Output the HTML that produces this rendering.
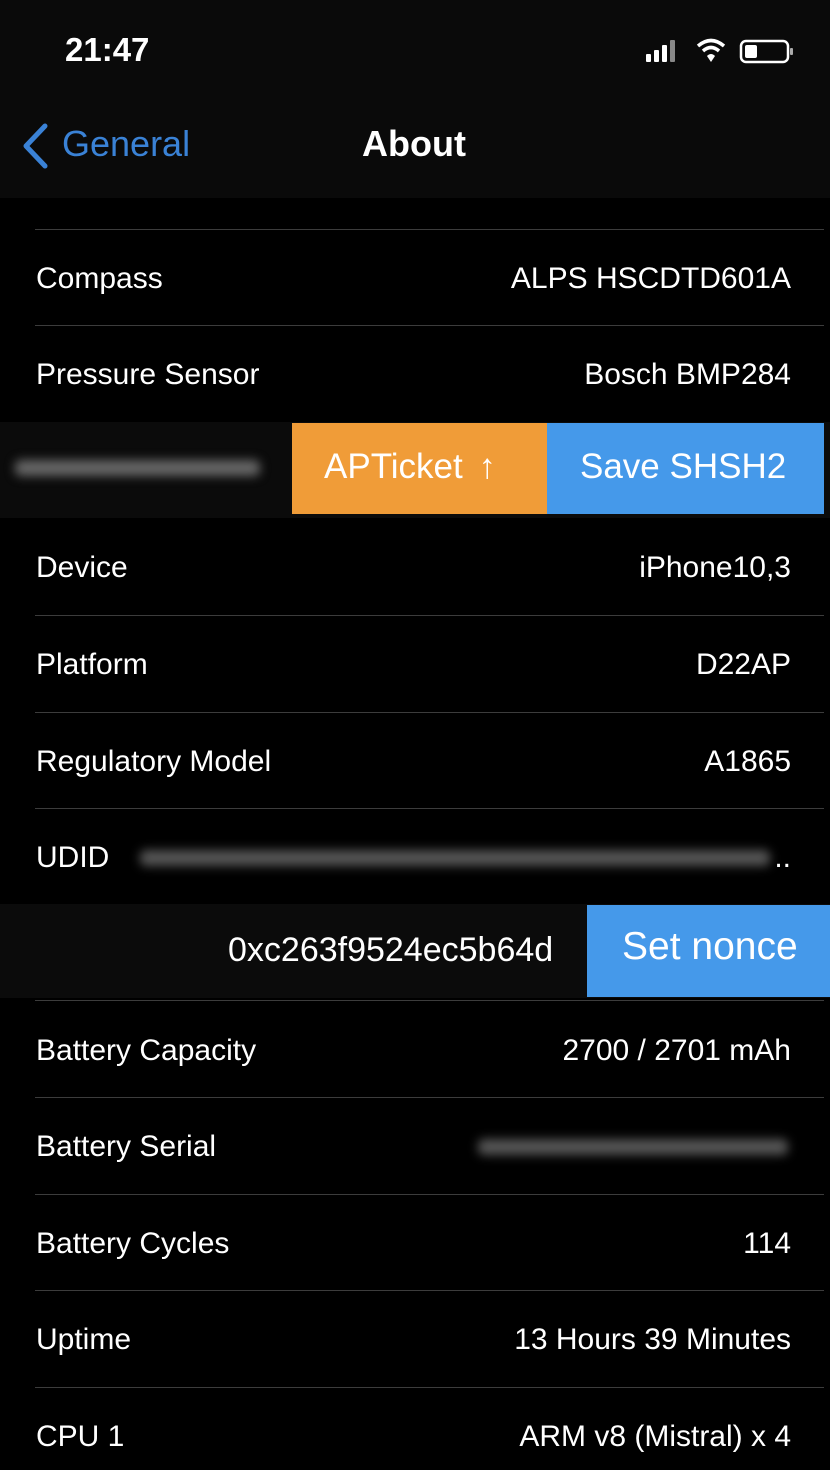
<!DOCTYPE html>
<html><head><meta charset="utf-8"><style>
*{margin:0;padding:0;box-sizing:border-box}
body{width:830px;height:1470px;background:#000;overflow:hidden;position:relative;font-family:"Liberation Sans",sans-serif;color:#fff}
.hdr{position:absolute;left:0;top:0;width:830px;height:198px;background:#0a0a0a}
.t{position:absolute;font-size:30px;line-height:34px;white-space:nowrap}
.r{right:39px;text-align:right}
.sep{position:absolute;left:35px;right:6px;height:1px;background:#3c3c3c}
.blur{position:absolute;height:16px;background:#666;filter:blur(5px);border-radius:6px}
</style></head><body>
<div class="hdr"></div>
<div class="t" style="left:65px;top:33px;font-size:33px;font-weight:bold">21:47</div>
<svg style="position:absolute;left:645px;top:38px" width="150" height="28" viewBox="0 0 150 28">
<rect x="1" y="16" width="5" height="8" rx="1" fill="#fff"/>
<rect x="9" y="12" width="5" height="12" rx="1" fill="#fff"/>
<rect x="17" y="7" width="5" height="17" rx="1" fill="#fff"/>
<rect x="25" y="2" width="5" height="22" rx="1" fill="#888"/>
<path d="M53 8 Q66 -3 79 8" stroke="#fff" stroke-width="3.5" fill="none"/>
<path d="M58 13 Q66 6 74 13" stroke="#fff" stroke-width="3.5" fill="none"/>
<path d="M62 18 L66 24 L70 18 Q66 14 62 18Z" fill="#fff"/>
<rect x="96" y="3" width="47" height="21" rx="5" stroke="#fff" stroke-width="2.5" fill="none"/>
<rect x="100" y="7" width="12" height="13" rx="2" fill="#fff"/>
<rect x="145" y="10" width="3" height="7" rx="1" fill="#aaa"/>
</svg>
<svg style="position:absolute;left:18px;top:122px" width="34" height="48" viewBox="0 0 34 48"><path d="M27 4 L8 24 L27 44" stroke="#3a82d6" stroke-width="5" fill="none" stroke-linecap="round" stroke-linejoin="round"/></svg>
<div class="t" style="left:62px;top:127px;font-size:36px;color:#3a82d6">General</div>
<div class="t" style="left:362px;top:127px;font-size:36px;font-weight:bold">About</div>

<div class="sep" style="top:229px"></div>
<div class="t" style="left:36px;top:262px">Compass</div><div class="t r" style="top:262px">ALPS HSCDTD601A</div>
<div class="sep" style="top:325px"></div>
<div class="t" style="left:36px;top:358px">Pressure Sensor</div><div class="t r" style="top:358px">Bosch BMP284</div>

<div style="position:absolute;left:0;top:422px;width:830px;height:96px;background:#0b0b0b"></div>
<div class="blur" style="left:15px;top:460px;width:245px"></div>
<div style="position:absolute;left:292px;top:423px;width:255px;height:91px;background:#f09c38"></div>
<div style="position:absolute;left:547px;top:423px;width:277px;height:91px;background:#4599ea"></div>
<div class="t" style="left:324px;top:450px;font-size:35px">APTicket <span style="display:inline-block;margin-left:6px">↑</span></div>
<div class="t" style="left:580px;top:450px;font-size:35px">Save SHSH2</div>

<div class="t" style="left:36px;top:551px">Device</div><div class="t r" style="top:551px">iPhone10,3</div>
<div class="sep" style="top:615px"></div>
<div class="t" style="left:36px;top:648px">Platform</div><div class="t r" style="top:648px">D22AP</div>
<div class="sep" style="top:712px"></div>
<div class="t" style="left:36px;top:745px">Regulatory Model</div><div class="t r" style="top:745px">A1865</div>
<div class="sep" style="top:808px"></div>
<div class="t" style="left:36px;top:841px">UDID</div>
<div class="blur" style="left:140px;top:850px;width:630px;background:#555"></div>
<div class="t r" style="top:841px">..</div>

<div style="position:absolute;left:0;top:904px;width:830px;height:94px;background:#0b0b0b"></div>
<div class="t" style="left:228px;top:933px;font-size:34px">0xc263f9524ec5b64d</div>
<div style="position:absolute;left:587px;top:905px;width:243px;height:92px;background:#4599ea"></div>
<div class="t" style="left:622px;top:930px;font-size:39px">Set nonce</div>
<div class="sep" style="top:1000px"></div>

<div class="t" style="left:36px;top:1034px">Battery Capacity</div><div class="t r" style="top:1034px">2700 / 2701 mAh</div>
<div class="sep" style="top:1097px"></div>
<div class="t" style="left:36px;top:1130px">Battery Serial</div>
<div class="blur" style="left:478px;top:1139px;width:310px;background:#555"></div>
<div class="sep" style="top:1194px"></div>
<div class="t" style="left:36px;top:1227px">Battery Cycles</div><div class="t r" style="top:1227px">114</div>
<div class="sep" style="top:1290px"></div>
<div class="t" style="left:36px;top:1323px">Uptime</div><div class="t r" style="top:1323px">13 Hours 39 Minutes</div>
<div class="sep" style="top:1387px"></div>
<div class="t" style="left:36px;top:1420px">CPU 1</div><div class="t r" style="top:1420px">ARM v8 (Mistral) x 4</div>
</body></html>
